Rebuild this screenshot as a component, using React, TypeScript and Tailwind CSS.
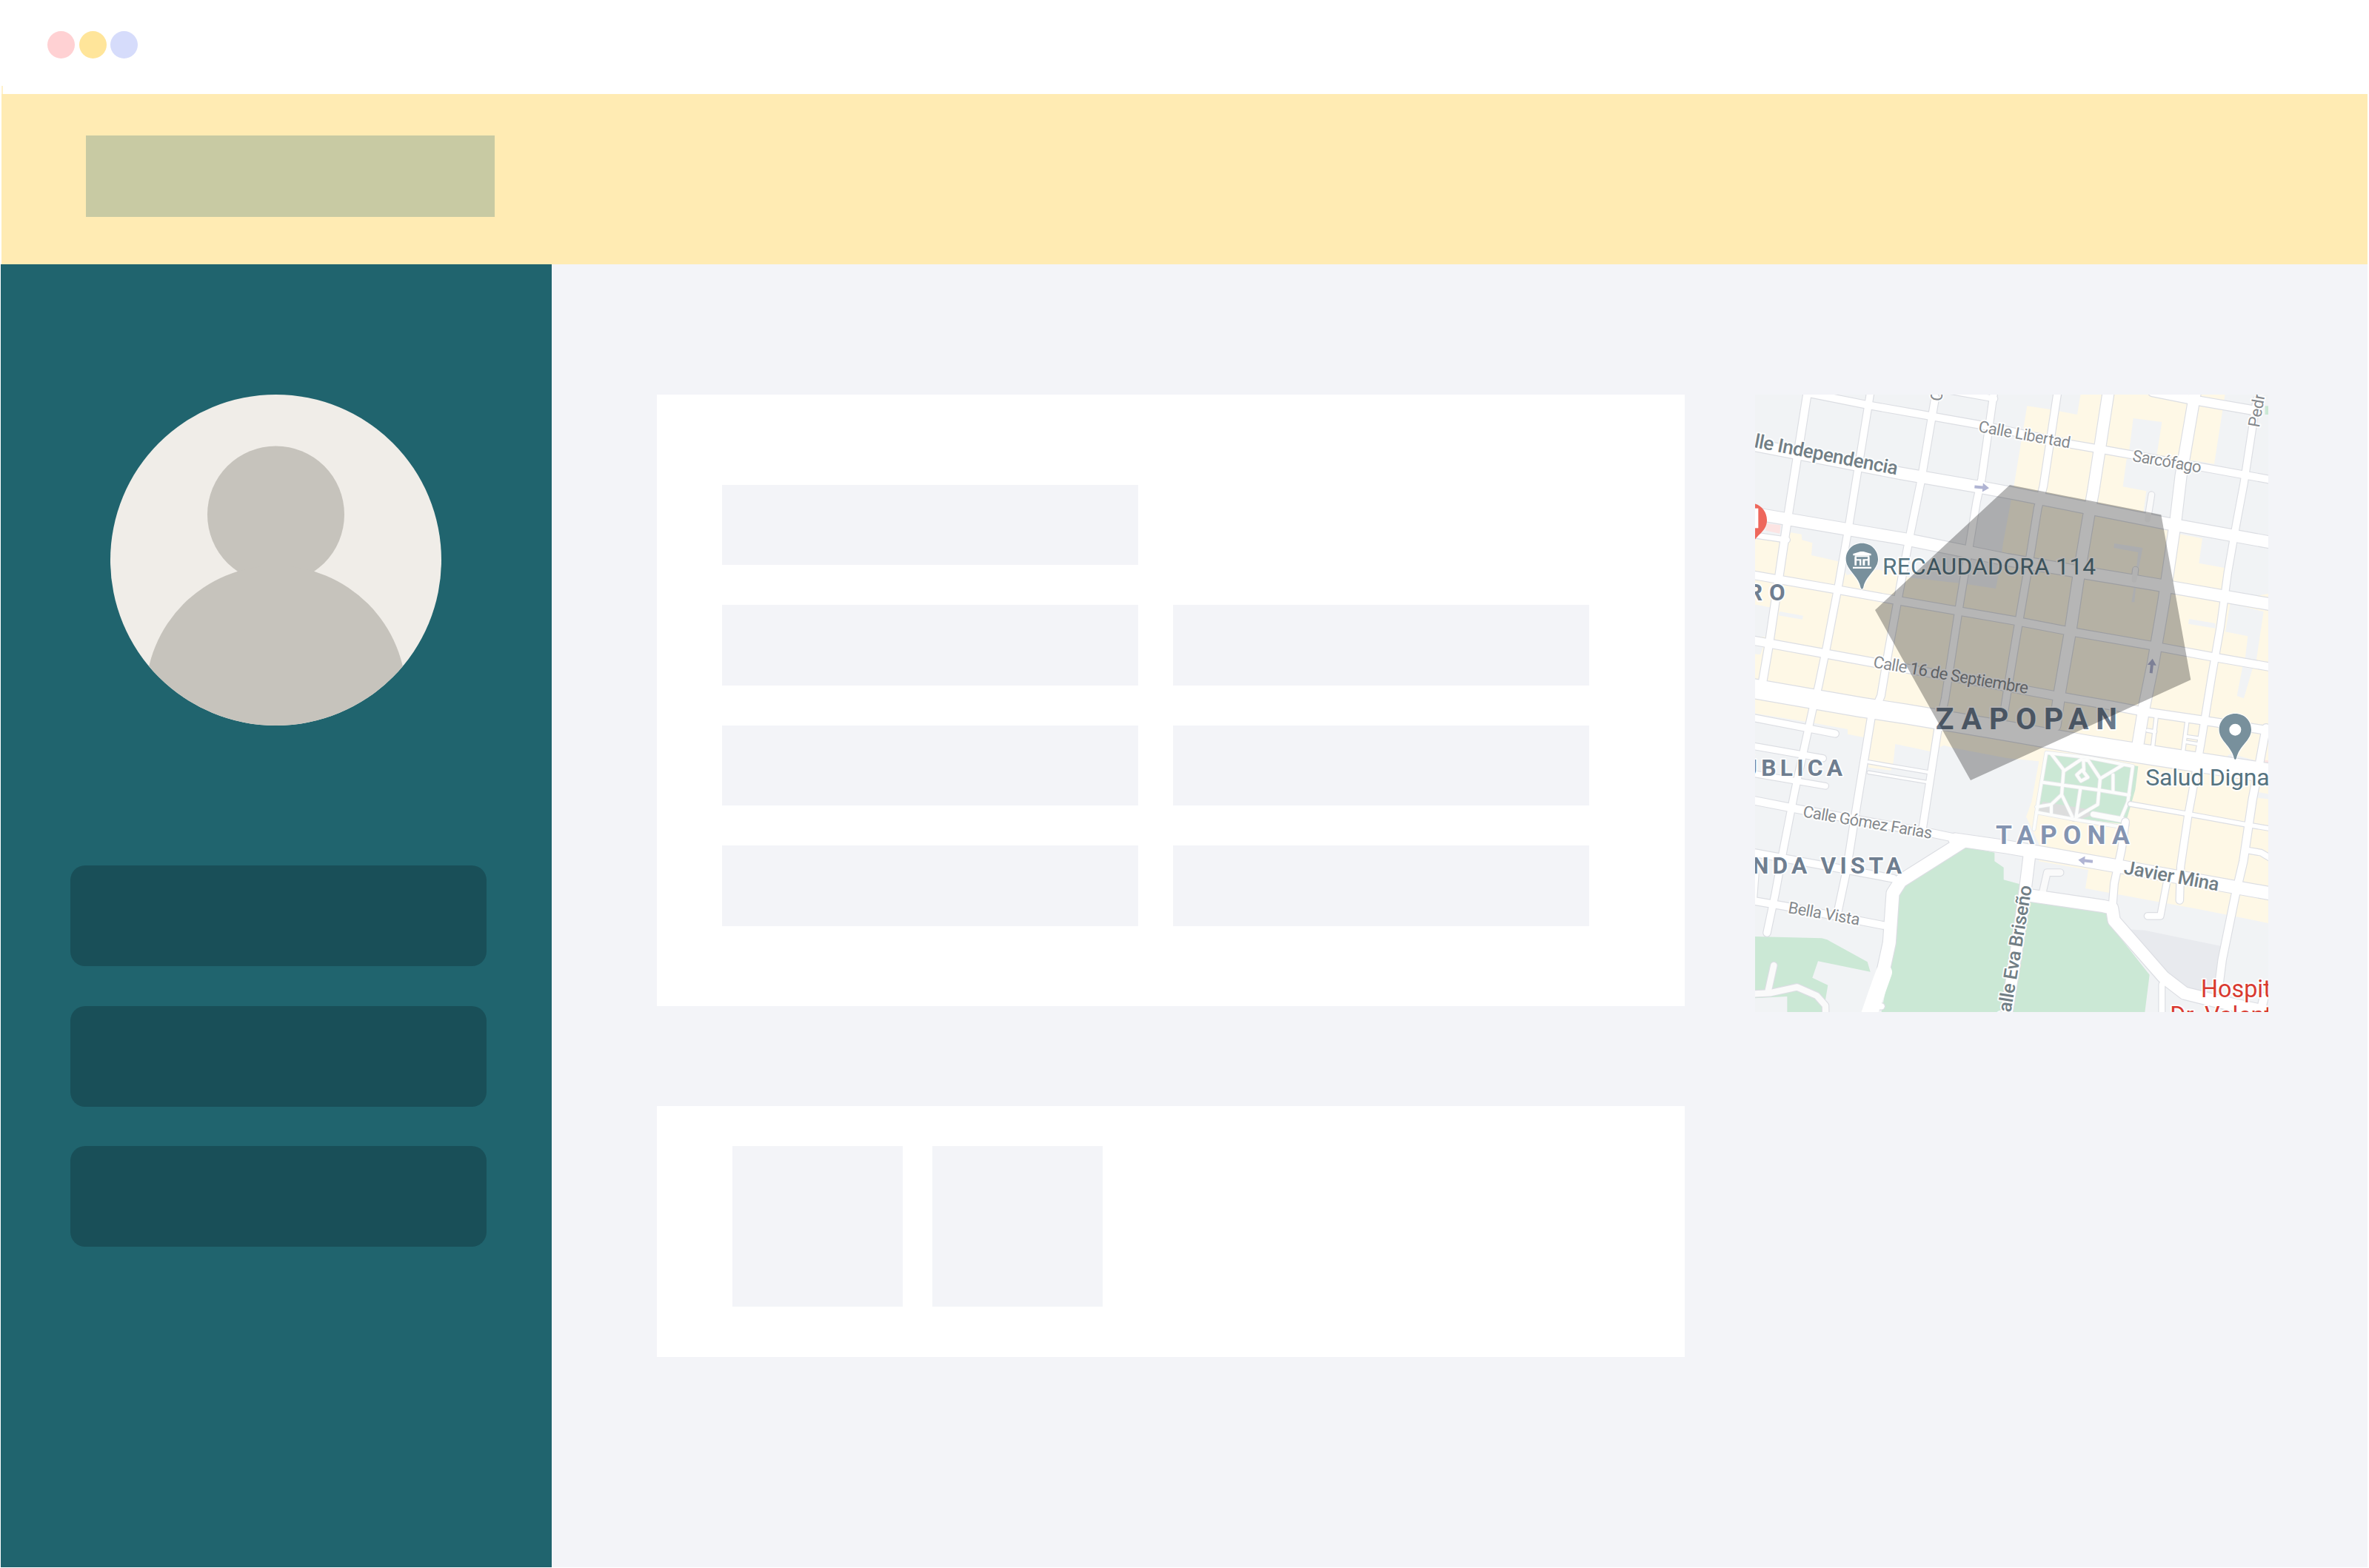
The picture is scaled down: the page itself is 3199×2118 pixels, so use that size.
import React from "react";

type Road = { d: string; w: number; soft?: boolean };

const roads: Road[] = [
  // streets running east-west
  { d: "M820 24L1000 56", w: 24 },
  { d: "M1640 28L1790 58L2045 102", w: 36 },
  { d: "M250 34L490 82L740 126L960 165L1310 240L1450 264L1850 335L2125 385", w: 30 },
  { d: "M10 240L620 358L930 412L1080 440L1400 503L1690 560L2125 639", w: 48 },
  { d: "M10 518L640 625L1050 708L1390 765L1650 808L2125 890", w: 48 },
  { d: "M10 606L160 628", w: 22 },
  { d: "M10 768L350 827L600 872L1080 955L1330 1003L1630 1055L1900 1105L2125 1144", w: 32 },
  { d: "M10 1033L310 1088L620 1145L1250 1260L1480 1300L1610 1325L1830 1357L2125 1403", w: 34 },
  { d: "M10 1228L460 1306L640 1333L1050 1402L1380 1460L1700 1510L2125 1575", w: 78 },
  { d: "M10 1346L355 1413", w: 28 },
  { d: "M10 1461L305 1513", w: 26 },
  { d: "M10 1573L315 1625", w: 24 },
  { d: "M10 1681L210 1720L750 1817L860 1840", w: 32 },
  { d: "M10 1893L240 1935L590 2000", w: 30 },
  { d: "M10 2088L150 2112L550 2190", w: 30 },
  { d: "M1550 1698L1780 1738L2010 1780L2125 1799", w: 18 },
  { d: "M490 1528L735 1570", w: 13 },
  { d: "M490 1570L725 1609", w: 11 },
  // streets running north-south
  { d: "M243 25L165 520L85 1060L55 1235", w: 32 },
  { d: "M498 25L410 570L370 800L320 1060L287 1220L262 1320L190 1650L145 1880L112 2060L78 2220", w: 29 },
  { d: "M760 50L700 400L655 620L610 860L570 1080L540 1260L500 1350L440 1715L400 1970L366 2130", w: 30 },
  { d: "M998 25L948 380L928 470L860 880L800 1270L770 1400L708 1800", w: 29 },
  { d: "M1256 25L1198 410L1175 500L1140 720L1090 1010L1055 1220L1035 1350", w: 30 },
  { d: "M1462 25L1400 430L1380 540L1340 780L1310 980L1265 1240L1245 1380", w: 46 },
  { d: "M1814 25L1755 370L1735 540L1685 880L1642 1130L1605 1310L1582 1450", w: 46 },
  { d: "M2062 60L2010 400L1980 560L1945 760L1915 980L1880 1180L1862 1290L1838 1440L1800 1660L1785 1740L1754 1950L1750 2088", w: 29 },
  { d: "M2100 1390L2072 1540L2045 1680L2008 1930L1975 2070L1922 2330L1908 2440", w: 32 },
  { d: "M1530 1770L1515 1880L1485 2020L1478 2110", w: 30 },
  { d: "M1142 1900L1125 2040L1095 2250L1045 2570", w: 48 },
  { d: "M1655 1345L1640 1475", w: 14 },
  { d: "M1620 1400L1650 1405", w: 14 },
  { d: "M1780 1362L1762 1500", w: 14 },
  { d: "M1775 1424L1830 1432M1770 1446L1830 1456", w: 12 },
  { d: "M2020 1885L2080 1895L2125 1922", w: 24 },
  { d: "M1697 2020L1672 2152L1620 2152", w: 26 },
  { d: "M1678 2430L1678 2570", w: 24 },
  { d: "M2092 2480L2070 2570", w: 34 },
  { d: "M500 2518L542 2518", w: 26 },
  { d: "M22 1985L14 2090", w: 44 },
  { d: "M1636 445L1620 545", w: 24, soft: true },
  { d: "M1571 748L1566 790", w: 22, soft: true },
  { d: "M1195 2055L1213 1976L1266 1976", w: 27, soft: true },
  // avenue skirting the park
  { d: "M840 1842L1050 1872L1500 1950L2125 2062", w: 52 },
  { d: "M870 1852L620 2010L588 2060L574 2260L548 2380L490 2570", w: 52 },
  { d: "M1140 2068L1440 2112L1476 2120L1484 2170L1685 2400L1770 2465L1900 2497L2125 2545", w: 50 },
  { d: "M10 2468L90 2464L200 2440L280 2475L315 2515L316 2570", w: 26, soft: true },
  { d: "M106 2352L82 2460", w: 26, soft: true },
];

const landmass = [
  // clearings inside the built-up area
  "1562,135 1678,150 1655,300 1535,300 1520,412 1615,430 1600,540 1745,560 1790,330 1660,290 1545,270",
  "20,888 112,905 100,970 72,1020 20,1020",
  "130,918 225,935 221,950 125,934",
  "20,1050 62,1062 52,1092 20,1090",
  "1955,885 2090,918 2060,1120 2015,1110 2026,1018 1935,1000",
  "2005,1140 2045,1150 2010,1270 1982,1260",
  "1788,948 1895,966 1895,986 1785,968",
  "1945,1500 1960,1495 2050,1520 2050,1545 1945,1530",
  "2070,1650 2120,1660 2120,1680 2062,1672",
  "1485,642 1600,660 1585,740 1575,740 1582,678 1483,660",
  "1565,820 1572,820 1567,880 1555,880",
];

type LabelProps = {
  x: number;
  y: number;
  size: number;
  fill: string;
  len?: number;
  rot?: number;
  weight?: number;
  halo?: number;
  children: string;
};

function Label({ x, y, size, fill, len, rot = 0, weight = 400, halo = 12, children }: LabelProps) {
  return (
    <text
      transform={`translate(${x} ${y}) rotate(${rot})`}
      fontSize={size}
      fontWeight={weight}
      fill={fill}
      stroke="#ffffff"
      strokeOpacity={0.85}
      strokeWidth={halo}
      strokeLinejoin="round"
      paintOrder="stroke"
      textLength={len}
    >
      {children}
    </text>
  );
}

function Pin({ x, y, fill }: { x: number; y: number; fill: string }) {
  return (
    <path
      transform={`translate(${x} ${y})`}
      d="M0 -65C-37 -65 -65 -37 -65 0C-65 44 -14 66 -5 116Q0 126 5 116C14 66 65 44 65 0C65 -37 37 -65 0 -65Z"
      fill={fill}
      stroke="#ffffff"
      strokeWidth={6}
      paintOrder="stroke"
    />
  );
}

function Arrow({ x, y, rot }: { x: number; y: number; rot: number }) {
  return (
    <path
      transform={`translate(${x} ${y}) rotate(${rot})`}
      d="M-29 -6H4V-18L30 0L4 18V6H-29Z"
      fill="#b0b4d3"
    />
  );
}

function CityMap() {
  return (
    <svg
      className="block h-[834px] w-[693px] shrink-0 font-[Roboto,sans-serif]"
      viewBox="30 39 2079 2502"
      role="img"
      aria-label="Zapopan"
    >
      <rect x="30" y="39" width="2079" height="2502" fill="#f1f3f5" />
      <polygon
        fill="#fef8e6"
        points="20,625 150,632 175,598 218,605 220,628 262,640 258,690 380,718 400,770 530,748 610,768 650,780 870,805 1005,825 1018,760 1035,640 1080,400 1132,85 1220,98 1335,120 1350,30 1935,30 1890,320 1800,305 1770,400 1720,600 1755,605 1842,622 1828,722 1935,742 1920,860 1925,880 2115,845 2115,2182 1830,2125 1640,2090 1368,2040 1380,1965 1180,1930 1180,1860 1128,1750 1150,1690 1180,1525 1050,1512 830,1470 795,1460 740,1485 598,1455 590,1530 580,1562 490,1550 470,1428 405,1415 405,1395 270,1370 20,1330"
      />
      {landmass.map((points) => (
        <polygon key={points} points={points} fill="#f1f3f5" />
      ))}
      <polygon points="78,562 134,568 130,602 72,590" fill="#fce4e3" />
      <polygon points="2095,1520 2115,1522 2115,1550 2092,1546" fill="#fce4e3" />
      <polygon points="2096,85 2115,85 2115,120 2096,120" fill="#cbe8d5" />

      <polygon
        fill="#cbe8d5"
        points="870,1870 1000,1895 1000,1930 1037,1955 1037,2005 1130,2030 1150,2080 1460,2140 1470,2190 1628,2390 1608,2550 540,2550 585,2320 610,2060 635,2025"
      />
      <polygon
        fill="#cbe8d5"
        points="20,2235 300,2242 322,2248 485,2338 497,2378 285,2335 262,2402 325,2432 305,2550 160,2550 160,2478 20,2485"
      />
      <polygon fill="#e8eaee" points="1530,2205 1610,2210 1922,2275 1895,2440 1840,2490 1690,2390" />
      <polygon fill="#cbe8d5" points="1210,1485 1582,1545 1570,1640 1550,1710 1530,1780 1360,1760 1180,1725 1190,1650" />
      <polygon fill="#dcdddd" points="1195,1688 1380,1720 1390,1745 1320,1770 1180,1725" />

      {/* park footpaths */}
      <g transform="translate(1050 1260)" fill="none" strokeLinejoin="round" strokeLinecap="round">
        {[
          ["#e6e8ea", 17],
          ["#fcfdfc", 12],
        ].map(([stroke, width]) => (
          <g key={stroke} stroke={String(stroke)} strokeWidth={width}>
            <path d="M160 230L140 350L125 440L110 540M160 230L330 250L510 285L490 430L465 490" />
            <path d="M145 350L375 382L495 402M180 235L230 300L222 400L265 490" />
            <path d="M230 305L300 258L330 262L378 335L470 280M378 335L368 440L280 492L298 375" />
            <path d="M310 262L312 300M305 300L328 330L300 345L283 320ZM430 320V385" />
            <path d="M222 400L180 440L120 450M180 440V475M120 472L300 505L460 530" />
            <path d="M350 480L470 502L485 520" strokeWidth={Number(width) + 10} />
          </g>
        ))}
      </g>

      <g fill="none" strokeLinejoin="round" strokeLinecap="round">
        {roads.map((r) => (
          <path key={r.d} d={r.d} stroke="#dcdee3" strokeWidth={r.w + 6} />
        ))}
        {roads.map((r) => (
          <path key={r.d} d={r.d} stroke={r.soft ? "#fafafa" : "#ffffff"} strokeWidth={r.w - 1} />
        ))}
        <path d="M552 2380L520 2470L482 2580" stroke="#ffffff" strokeWidth="66" />
      </g>

      <Arrow x={948} y={415} rot={5} />
      <Arrow x={1637} y={1139} rot={-84} />
      <Arrow x={1369} y={1928} rot={186} />

      {/* hospital pin cut by the left edge */}
      <g>
        <path d="M8 478C48 478 78 508 78 548C78 590 40 606 28 630L0 640V478Z" fill="#ee675c" />
        <path d="M20 500H43V580H20Z" fill="#ffffff" />
      </g>

      <Pin x={463} y={706} fill="#78909c" />
      <g fill="#ffffff">
        <path d="M427 691V684L457 675H469L500 684V691Z" />
        <path d="M434 691H493V697H434ZM441 706H460V731H453V712H441ZM466 706H488V712H475V731H466Z" />
        <path d="M433 697H441V731H433ZM486 697H494V731H486ZM426 737H501V744H426Z" />
      </g>
      <Pin x={1975} y={1397} fill="#78909c" />
      <circle cx="1975" cy="1397" r="24" fill="#ffffff" />

      <Label x={24} y={252} size={78} rot={11} weight={500} fill="#717e85" len={590}>lle Independencia</Label>
      <Label x={932} y={189} size={65} rot={10.3} fill="#85898d" len={378}>Calle Libertad</Label>
      <Label x={1556} y={308} size={66} rot={9.8} fill="#85898d" len={282}>Sarcófago</Label>
      <Label x={2072} y={174} size={66} rot={-80} fill="#85898d">Pedro</Label>
      <Label x={785} y={68} size={66} rot={-82} fill="#85898d">C</Label>
      <Label x={506} y={1144} size={67} rot={9.7} fill="#85898d" len={636}>Calle 16 de Septiembre</Label>
      <Label x={221} y={1750} size={66} rot={9.6} fill="#85898d" len={530}>Calle Gómez Farias</Label>
      <Label x={161} y={2139} size={66} rot={9.8} fill="#85898d" len={294}>Bella Vista</Label>
      <Label x={1521} y={1980} size={77} rot={10.4} weight={500} fill="#717e85" len={390}>Javier Mina</Label>
      <Label x={1058} y={2592} size={76} rot={-80.5} weight={500} fill="#717e85" len={568}>Calle Eva Briseño</Label>

      <Label x={546} y={769} size={95} fill="#557380" len={864}>RECAUDADORA 114</Label>
      <Label x={1612} y={1624} size={96} fill="#557380" len={502}>Salud Digna</Label>
      <Label x={1836} y={2480} size={97} fill="#d93a30">Hospital</Label>
      <Label x={1711} y={2590} size={97} fill="#d93a30">Dr. Valentín</Label>

      <Label x={0} y={872} size={94} weight={700} fill="#6f7e90" len={152}>RO</Label>
      <Label x={-24} y={1584} size={95} weight={700} fill="#6f7e90" len={408}>ÚBLICA</Label>
      <Label x={18} y={1980} size={95} weight={700} fill="#6f7e90" len={606}>NDA VISTA</Label>
      <Label x={761} y={1394} size={122} weight={700} fill="#68788a" len={736}>ZAPOPAN</Label>
      <Label x={1005} y={1860} size={106} weight={700} fill="#8494b1" len={542}>TAPONA</Label>

      {/* selected zone */}
      <polygon points="516,912 1062,405 1675,526 1795,1195 903,1602" fill="#000000" fillOpacity={0.285} />
    </svg>
  );
}

function Avatar() {
  return (
    <svg className="block size-[447px]" viewBox="0 0 447 447" aria-hidden="true">
      <defs>
        <clipPath id="avatar-disc">
          <circle cx="223.5" cy="223.5" r="223.5" />
        </clipPath>
      </defs>
      <g clipPath="url(#avatar-disc)">
        <rect width="447" height="447" fill="#f0ede8" />
        <circle cx="223.5" cy="162" r="92.5" fill="#c6c3bc" />
        <circle cx="223.5" cy="407" r="176" fill="#c6c3bc" />
      </g>
    </svg>
  );
}

function Field({ className = "" }: { className?: string }) {
  return <div className={`h-[108.5px] bg-[#f3f4f8] ${className}`} />;
}

export default function App() {
  return (
    <div className="flex h-[2118px] w-[3199px] flex-col overflow-hidden bg-white">
      <div className="flex h-[116px] shrink-0 gap-[5.5px] pt-[42px] pl-[64px]">
        <span className="size-[37px] rounded-full bg-[#ffd1d3]" />
        <span className="size-[37px] rounded-full bg-[#ffe59a]" />
        <span className="size-[37px] rounded-full bg-[#d6dcfb]" />
      </div>
      <div className="ml-[2px] h-[11px] shrink-0 border-l-2 border-[#fff1cb]" />
      <header className="mr-[2px] ml-[2px] flex h-[230px] shrink-0 bg-[#ffebb3] pt-[56px] pl-[114px]">
        <div className="h-[110px] w-[552px] bg-[#c8caa3]" />
      </header>

      <div className="mr-[2px] mb-px ml-px flex min-h-0 flex-1">
        <aside className="flex w-[744px] shrink-0 flex-col bg-[#20646e] pt-[176px] pl-[94px]">
          <div className="pl-[54px]">
            <Avatar />
          </div>
          <nav className="mt-[189px] flex w-[562px] flex-col gap-[53.5px]">
            <div className="h-[136px] rounded-[20px] bg-[#194f58]" />
            <div className="h-[136px] rounded-[20px] bg-[#194f58]" />
            <div className="h-[136px] rounded-[20px] bg-[#194f58]" />
          </nav>
        </aside>

        <main className="flex flex-1 items-start gap-[95px] bg-[#f3f4f8] pt-[176px] pl-[142px]">
          <div className="flex w-[1388px] shrink-0 flex-col gap-[135px]">
            <section className="h-[826px] bg-white pt-[121.5px] pl-[88px]">
              <div className="grid grid-cols-[562px_562px] gap-x-[47px] gap-y-[54px]">
                <Field className="col-span-2 w-[562px]" />
                <Field />
                <Field />
                <Field />
                <Field />
                <Field />
                <Field />
              </div>
            </section>
            <section className="flex h-[339px] gap-[40px] bg-white pt-[54px] pl-[102px]">
              <div className="h-[217px] w-[230px] bg-[#f3f4f8]" />
              <div className="h-[217px] w-[230px] bg-[#f3f4f8]" />
            </section>
          </div>
          <CityMap />
        </main>
      </div>
    </div>
  );
}
